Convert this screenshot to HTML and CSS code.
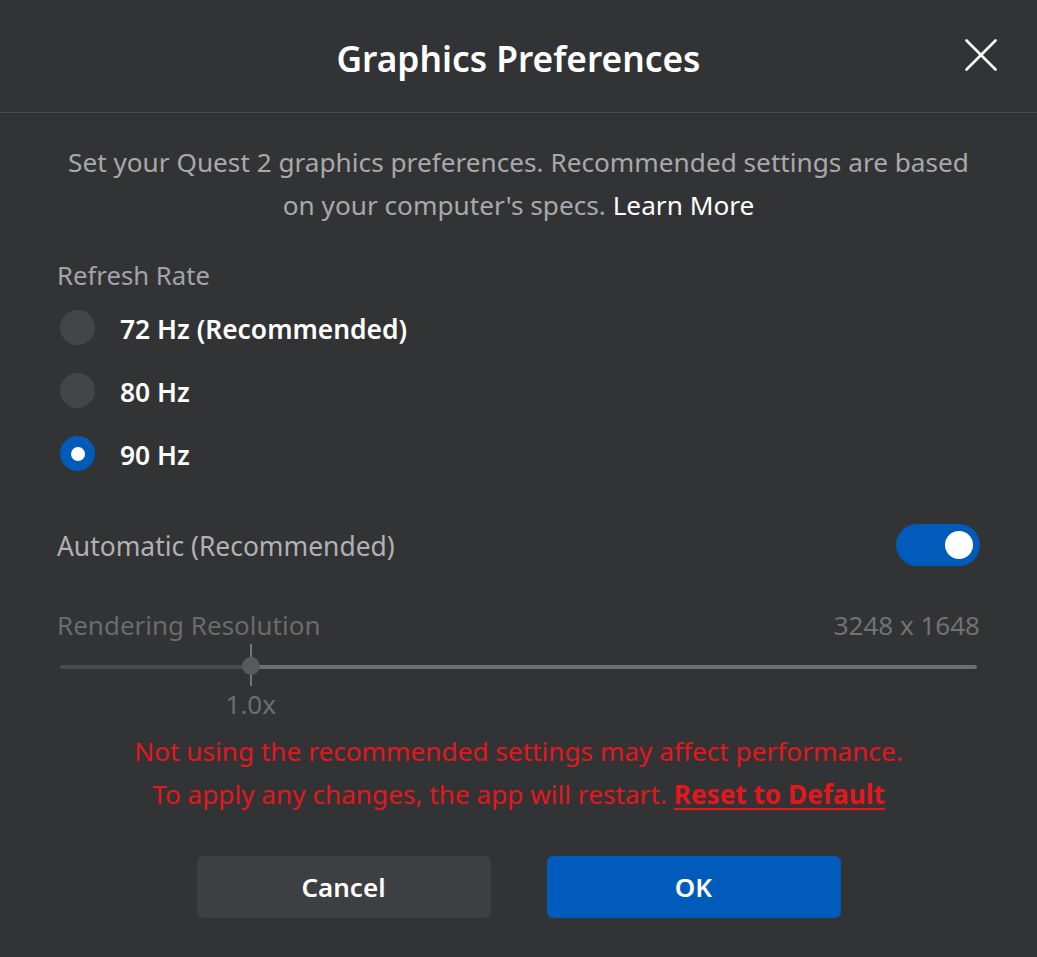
FILE: index.html
```html
<!DOCTYPE html>
<html lang="en">
<head>
<meta charset="utf-8">
<title>Graphics Preferences</title>
<link rel="stylesheet" href="styles.css">
</head>
<body>
<div class="dialog">
  <header class="header">
    <div></div>
    <h1 class="title">Graphics Preferences</h1>
    <button class="close" aria-label="Close">
      <svg width="32" height="32" viewBox="0 0 32 32"><path d="M1.5 1.5 L30.5 30.5 M30.5 1.5 L1.5 30.5" stroke="#ffffff" stroke-width="2.6" stroke-linecap="round" fill="none"/></svg>
    </button>
  </header>

  <main class="content">
    <p class="desc">Set your Quest 2 graphics preferences. Recommended settings are based<br>on your computer's specs. <span class="link">Learn More</span></p>

    <div class="section-label">Refresh Rate</div>
    <div class="radios">
      <div class="radio-row"><span class="radio"></span><span class="radio-label">72 Hz (Recommended)</span></div>
      <div class="radio-row"><span class="radio"></span><span class="radio-label">80 Hz</span></div>
      <div class="radio-row"><span class="radio selected"><span class="dot"></span></span><span class="radio-label">90 Hz</span></div>
    </div>

    <div class="auto-row">
      <span class="auto-label">Automatic (Recommended)</span>
      <span class="toggle"><span class="knob"></span></span>
    </div>

    <div class="res-row">
      <span class="res-label">Rendering Resolution</span>
      <span class="res-value">3248 x 1648</span>
    </div>

    <div class="slider">
      <div class="track">
        <div class="fill" style="width: 20.8%"></div>
        <div class="rest"></div>
        <span class="tick" style="left: 20.8%"></span>
        <span class="thumb" style="left: 20.8%"></span>
      </div>
    </div>
    <div class="scale">
      <div class="scale-spacer" style="width: 20.8%"></div>
      <div class="scale-anchor"><span class="scale-label">1.0x</span></div>
    </div>

    <p class="warning">Not using the recommended settings may affect performance.<br>To apply any changes, the app will restart. <span class="reset">Reset to Default</span></p>

    <div class="buttons">
      <button class="btn btn-cancel">Cancel</button>
      <button class="btn btn-ok">OK</button>
    </div>
  </main>
</div>
</body>
</html>
```
FILE: styles.css
```css
* { box-sizing: border-box; }
html, body { margin: 0; padding: 0; }
body {
  background: #323335;
  font-family: "Noto Sans", "Open Sans", sans-serif;
  color: #ffffff;
  width: 1037px;
  height: 957px;
  overflow: hidden;
}
.dialog { width: 1037px; }

.header {
  height: 113px;
  padding-top: 3px;
  display: grid;
  grid-template-columns: 1fr auto 1fr;
  align-items: center;
  border-bottom: 1px solid #4a4b4e;
}
.title {
  margin: 0;
  font-size: 35.3px;
  font-weight: 600;
  line-height: 48px;
  color: #ffffff;
}
.close {
  justify-self: end;
  margin-right: 40px;
  margin-top: -5px;
  width: 32px;
  height: 32px;
  padding: 0;
  border: 0;
  background: none;
  display: flex;
}

.content {
  padding: 0 57px;
}
.desc {
  margin: 28px 0 0;
  text-align: center;
  font-size: 26.2px;
  line-height: 43px;
  color: #a8a9ab;
}
.link { color: #ffffff; }

.section-label {
  margin-top: 31px;
  font-size: 25.7px;
  line-height: 36px;
  color: #a3a4a6;
}

.radios {
  margin-top: 2px;
  display: flex;
  flex-direction: column;
}
.radio-row {
  height: 63px;
  display: flex;
  align-items: center;
  gap: 25px;
  padding-left: 3px;
}
.radio {
  width: 35px;
  height: 35px;
  border-radius: 50%;
  background: #444548;
  display: flex;
  align-items: center;
  justify-content: center;
  flex: none;
}
.radio.selected { background: #005bbb; }
.dot {
  width: 14px;
  height: 14px;
  border-radius: 50%;
  background: #ffffff;
}
.radio-label {
  font-size: 26.4px;
  font-weight: 600;
  line-height: 36px;
  color: #ffffff;
  padding-top: 2px;
}

.auto-row {
  margin-top: 39px;
  height: 42px;
  display: flex;
  align-items: center;
  justify-content: space-between;
}
.auto-label {
  font-size: 26.4px;
  line-height: 36px;
  color: #b0b1b3;
  padding-top: 2px;
}
.toggle {
  width: 84px;
  height: 42px;
  border-radius: 21px;
  background: #005bbb;
  display: flex;
  align-items: center;
  justify-content: flex-end;
  padding-right: 7px;
}
.knob {
  width: 28px;
  height: 28px;
  border-radius: 50%;
  background: #ffffff;
}

.res-row {
  margin-top: 41px;
  display: flex;
  justify-content: space-between;
  font-size: 26px;
  line-height: 36px;
}
.res-label { color: #6a6b6d; }
.res-value { color: #717274; font-size: 26px; }

.slider {
  margin-top: 3px;
  height: 42px;
  padding: 0 3px;
  display: flex;
  align-items: center;
}
.track {
  position: relative;
  flex: 1;
  height: 4px;
  display: flex;
}
.fill {
  height: 4px;
  background: #4a4b4e;
  border-radius: 2px 0 0 2px;
}
.rest {
  flex: 1;
  height: 4px;
  background: #6d6e71;
  border-radius: 0 2px 2px 0;
}
.tick {
  position: absolute;
  top: -21px;
  width: 2px;
  height: 42px;
  margin-left: -1px;
  background: #747577;
}
.thumb {
  position: absolute;
  top: -8px;
  width: 18px;
  height: 18px;
  margin-left: -9px;
  border-radius: 50%;
  background: #58595c;
}

.scale {
  display: flex;
  padding-left: 3px;
  padding-right: 3px;
  height: 33px;
}
.scale-spacer { flex: none; }
.scale-anchor {
  width: 0;
  display: flex;
  justify-content: center;
}
.scale-label {
  font-size: 26px;
  line-height: 33px;
  color: #6c6d6f;
  white-space: nowrap;
}

.warning {
  margin: 9px 0 0;
  text-align: center;
  font-size: 26.2px;
  line-height: 43px;
  color: #e3171d;
}
.reset {
  font-weight: 700;
  text-decoration: underline;
  text-decoration-thickness: 2px;
  text-underline-offset: 4px;
}

.buttons {
  margin-top: 40px;
  display: flex;
  justify-content: center;
  gap: 56px;
}
.btn {
  width: 294px;
  height: 62px;
  border: 0;
  border-radius: 6px;
  font-family: "Noto Sans", "Open Sans", sans-serif;
  font-size: 26px;
  font-weight: 600;
  color: #ffffff;
  padding: 0;
}
.btn-cancel { background: #3e3f42; }
.btn-ok { background: #005bbb; }
```
